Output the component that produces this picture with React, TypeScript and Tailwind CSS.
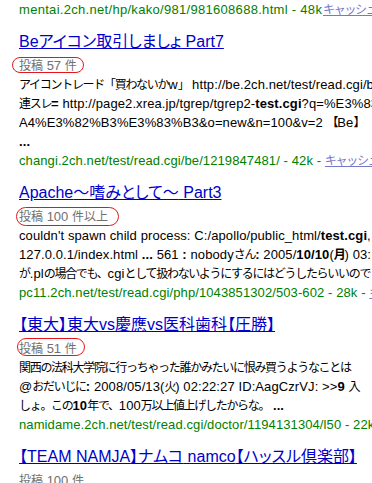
import React from "react";

// CJK runs get their own size so they sit like the old bitmap gothic
const CJK = /([\u3000-\u30ff\u3400-\u9fff\uf900-\ufaff\uff00-\uffef]+)/;

function jp(text: string, cls: string) {
  return text.split(CJK).map((s, i) =>
    i % 2 ? (
      <span key={i} className={cls}>
        {s}
      </span>
    ) : (
      s
    )
  );
}

const small = "text-[12px] leading-none tracking-[-1.3px] [font-feature-settings:normal]";
const count = "text-[12px] leading-none tracking-normal";
const big = "text-[16px] leading-none";

type Part = string | { b: string };

function Line({ parts }: { parts: Part[] }) {
  return (
    <div className="h-[19px] leading-[19px] whitespace-nowrap text-black">
      {parts.map((p, i) =>
        typeof p === "string" ? (
          <React.Fragment key={i}>{jp(p, small)}</React.Fragment>
        ) : (
          <b key={i} className="font-bold">
            {jp(p.b, small)}
          </b>
        )
      )}
    </div>
  );
}

function Url({ url }: { url: string }) {
  return (
    <div className="h-[19px] leading-[19px] whitespace-nowrap">
      <span className="text-[#008000]">{url}</span>
      <span className="text-[#7777cc] underline">{jp("キャッシュ", small)}</span>
    </div>
  );
}

function Title({ text }: { text: string }) {
  return (
    <div className="mt-[13px] h-[20px] leading-[20px] whitespace-nowrap">
      <a className="text-[16px] tracking-normal text-[#0000cc] underline cursor-pointer">
        {jp(text, big)}
      </a>
    </div>
  );
}

function Count({ text, oval }: { text: string; oval?: string }) {
  return (
    <div className="relative h-[23px] pt-[4px] leading-[19px] whitespace-nowrap tracking-normal text-[#6f6f6f]">
      {jp(text, count)}
      {oval && (
        <span
          className={
            "absolute rounded-full border border-[#e8141c] pointer-events-none " +
            oval
          }
        />
      )}
    </div>
  );
}

export default function App() {
  return (
    <div className="w-[372px] h-[483px] overflow-hidden bg-white pl-[19px] text-[13px] tracking-[0.1px] font-['Liberation_Sans','Noto_Sans_CJK_JP',sans-serif] [font-feature-settings:'palt']">
      <div className="relative h-[19px] leading-[19px] whitespace-nowrap">
        <span className="text-[#008000] tracking-[0.3px]">
          mentai.2ch.net/hp/kako/981/981608688.html - 48k
        </span>
        <span className="absolute left-[304px] top-0 text-[#7777cc] underline">
          {jp("キャッシュ", small)}
        </span>
      </div>

      <Title text="Beアイコン取引しましょ Part7" />
      <Count text="投稿 57 件" oval="top-[5px] left-[-7px] w-[72px] h-[16px]" />
      <Line parts={["アイコントレード「買わないかw」 http://be.2ch.net/test/read.cgi/be/"]} />
      <Line
        parts={[
          "連スレ",
          { b: "=" },
          " http://page2.xrea.jp/tgrep/tgrep2-",
          { b: "test.cgi" },
          "?q=%E3%83%",
        ]}
      />
      <Line parts={["A4%E3%82%B3%E3%83%B3&o=new&n=100&v=2 【Be】"]} />
      <Line parts={[{ b: "..." }]} />
      <Url url="changi.2ch.net/test/read.cgi/be/1219847481/ - 42k - " />

      <Title text="Apache～嗜みとして～ Part3" />
      <Count text="投稿 100 件以上" oval="top-[4px] left-[-3px] w-[103px] h-[19px]" />
      <Line
        parts={[
          "couldn't spawn child process: C:/apollo/public_html/",
          { b: "test.cgi" },
          ", ...",
        ]}
      />
      <Line
        parts={[
          "127.0.0.1/index.html ",
          { b: "..." },
          " 561 ",
          { b: ":" },
          " nobodyさん",
          { b: ":" },
          " 2005/",
          { b: "10/10" },
          "(",
          { b: "月" },
          ") 03:",
        ]}
      />
      <Line parts={["が.plの場合でも、cgiとして扱わないようにするにはどうしたらいいのでしょう"]} />
      <Url url="pc11.2ch.net/test/read.cgi/php/1043851302/503-602 - 28k - " />

      <Title text="【東大】東大vs慶應vs医科歯科【圧勝】" />
      <Count text="投稿 51 件" oval="top-[3px] left-[-2px] w-[68px] h-[18px]" />
      <Line parts={["関西の法科大学院に行っちゃった誰かみたいに恨み買うようなことは"]} />
      <Line
        parts={[
          "@おだいじに",
          { b: ":" },
          " 2008/05/13(火) 02:22:27 ID:AagCzrVJ: >>",
          { b: "9" },
          " 入",
        ]}
      />
      <Line
        parts={[
          "しょ。この",
          { b: "10" },
          "年で、100万以上値上げしたからな。 ",
          { b: "..." },
        ]}
      />
      <Url url="namidame.2ch.net/test/read.cgi/doctor/1194131304/l50 - 22k - " />

      <Title text="【TEAM NAMJA】ナムコ namco【ハッスル倶楽部】" />
      <Count text="投稿 100 件" />
    </div>
  );
}
